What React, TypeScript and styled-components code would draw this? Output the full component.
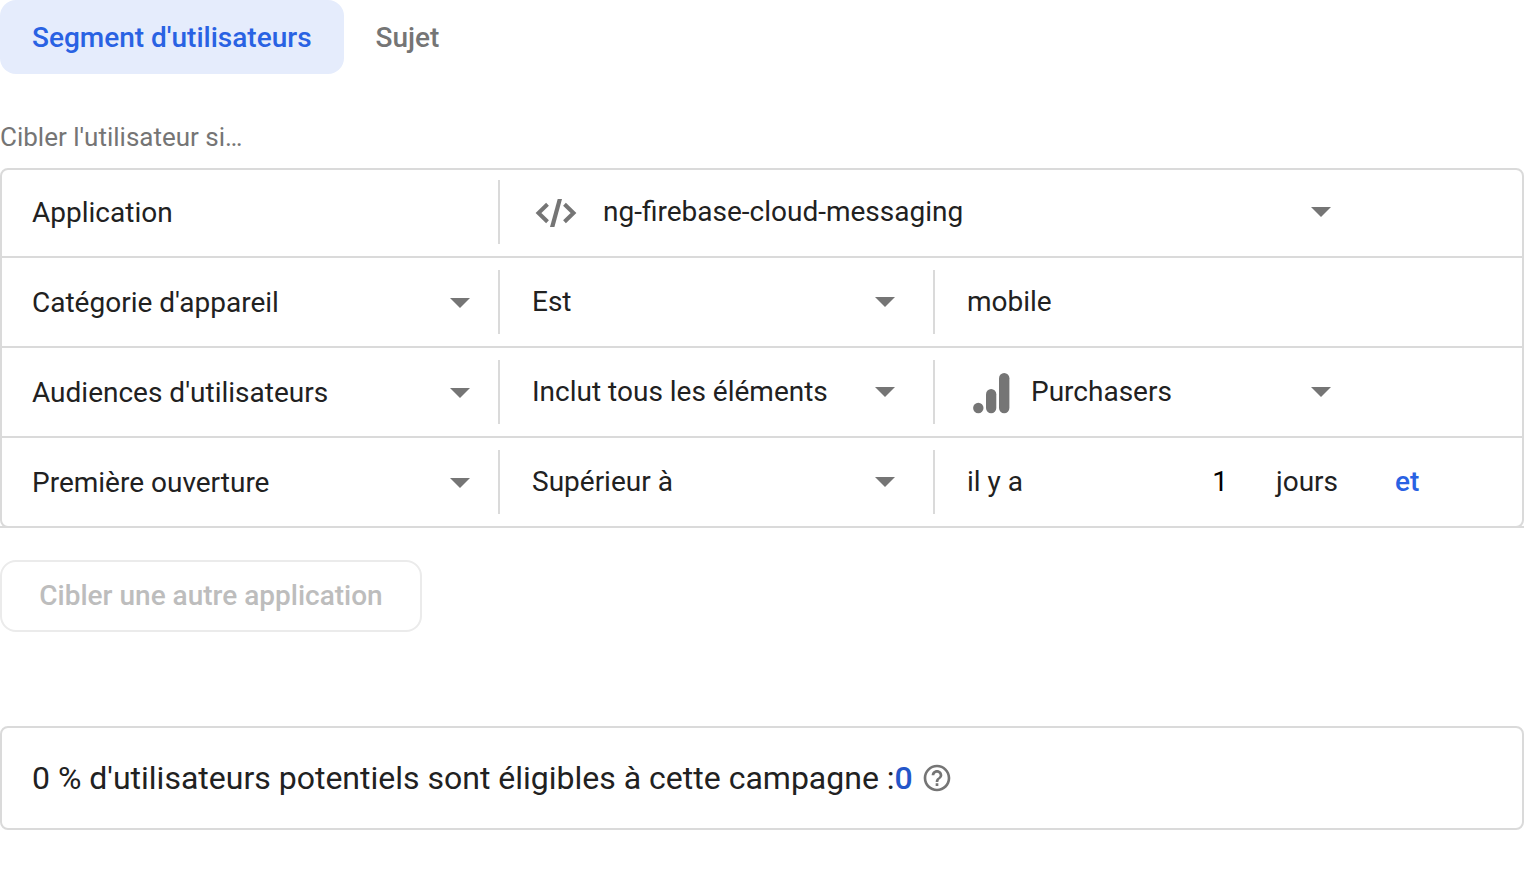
import React from "react";
import styled, { createGlobalStyle } from "styled-components";

const GlobalStyle = createGlobalStyle`
  *, *::before, *::after { box-sizing: border-box; }
  body { margin: 0; background: #fff; }
  body, button, input, select {
    font-family: Roboto, "Liberation Sans", sans-serif;
    font-size: 28px;
    line-height: 40px;
    color: #212121;
  }
`;

const Page = styled.main`
  display: flex;
  flex-direction: column;
  align-items: stretch;
`;

const Tabs = styled.div`
  display: flex;
`;

const Tab = styled.button<{ $active?: boolean }>`
  height: 74px;
  padding: 2px 32px 0;
  border: 0;
  border-radius: 16px;
  background: ${(p) => (p.$active ? "#e5ecfc" : "transparent")};
  color: ${(p) => (p.$active ? "#2962e3" : "#757575")};
  font-weight: 500;
  cursor: pointer;
`;

const Hint = styled.p`
  margin: 43px 0 11px;
  font-size: 26px;
  color: #757575;
`;

const Panel = styled.section`
  position: relative;
  border: 2px solid #dadada;
  border-radius: 8px;

  &::after {
    content: "";
    position: absolute;
    left: -2px;
    right: -2px;
    bottom: -2px;
    height: 2px;
    background: #dadada;
  }
`;

const Row = styled.div`
  display: grid;
  grid-template-columns: minmax(0, 498fr) minmax(0, 435fr) minmax(0, 587fr);
  padding: 12px 0;
  border-bottom: 2px solid #dadada;

  &:first-child { padding-top: 10px; }
  &:last-child { border-bottom: 0; }
`;

const Cell = styled.div<{ $kind: "subject" | "operator" | "value"; $wide?: boolean }>`
  display: flex;
  align-items: center;
  height: 64px;
  grid-column: ${(p) => (p.$wide ? "span 2" : "auto")};
  padding-top: ${(p) => (p.$kind === "subject" ? 2 : 0)}px;
  padding-left: ${(p) => (p.$kind === "subject" ? 30 : 32)}px;
  padding-right: ${(p) => ({ subject: 28, operator: 38, value: 191 })[p.$kind]}px;
  border-right: ${(p) => (p.$kind === "value" ? "0" : "2px solid #dadada")};
`;

const Picker = styled.div`
  display: grid;
  flex: 1;
  align-items: center;
  min-width: 0;

  > * { grid-area: 1 / 1; }
  > svg { justify-self: end; pointer-events: none; }
`;

const Select = styled.select`
  width: 100%;
  height: 60px;
  padding: 0 28px 0 0;
  border: 0;
  appearance: none;
  background: transparent;
  cursor: pointer;
`;

const IconSlot = styled.span<{ $gap: number }>`
  display: flex;
  flex: none;
  margin-right: ${(p) => p.$gap}px;
`;

const ValueInput = styled.input`
  width: 100%;
  padding: 0;
  border: 0;
  background: transparent;
`;

const AgeCell = styled.div`
  display: grid;
  grid-template-columns: 261fr 167fr 127fr;
  align-items: center;
  padding-left: 32px;
  height: 64px;
`;

const AgeField = styled.label`
  display: flex;
  align-items: center;
  justify-content: space-between;
`;

const AgeInput = styled.input`
  width: 96px;
  padding: 0;
  border: 0;
  background: transparent;
  color: #000;
  text-align: right;
  appearance: textfield;

  &::-webkit-inner-spin-button { appearance: none; margin: 0; }
`;

const Unit = styled.span`
  padding-left: 48px;
`;

const AndButton = styled.button`
  justify-self: start;
  padding: 0;
  border: 0;
  background: transparent;
  color: #2962e3;
  font-weight: 500;
  cursor: pointer;
`;

const AddButton = styled.button`
  align-self: flex-start;
  min-width: 422px;
  height: 72px;
  margin-top: 32px;
  padding: 0 30px;
  border: 2px solid #ebebeb;
  border-radius: 16px;
  background: #fff;
  color: #bdbdbd;
  font-weight: 500;
`;

const Summary = styled.section`
  display: flex;
  align-items: center;
  height: 104px;
  margin-top: 94px;
  padding: 0 30px;
  border: 2px solid #dadada;
  border-radius: 8px;
  font-size: 32px;
`;

const Count = styled.strong`
  margin-right: 8px;
  color: #2456c9;
  font-weight: 500;
`;

const HelpButton = styled.button`
  display: flex;
  padding: 0;
  border: 0;
  background: transparent;
  cursor: pointer;
`;

const Arrow = () => (
  <svg width="20" height="10" viewBox="0 0 20 10" aria-hidden="true">
    <path d="M0 0h20L10 10z" fill="#757575" />
  </svg>
);

const CodeIcon = () => (
  <svg width="48" height="32" viewBox="0 0 48 32" fill="none" stroke="#757575" aria-hidden="true">
    <path d="M15.500 8.300 6.500 17l9 8.700M32.500 8.300 41.500 17l-9 8.700" strokeWidth="4" />
    <path d="M25.700 3H30l-7.600 28H18z" fill="#757575" stroke="none" />
  </svg>
);

const AnalyticsIcon = () => (
  <svg width="48" height="48" viewBox="0 0 48 48" fill="#757575" aria-hidden="true">
    <circle cx="11.300" cy="40" r="5.200" />
    <rect x="19" y="21" width="10.300" height="24.200" rx="5.150" />
    <rect x="32" y="5" width="10.400" height="40.200" rx="5.200" />
  </svg>
);

const HelpIcon = () => (
  <svg width="32" height="32" viewBox="0 0 24 24" fill="#757575" aria-hidden="true">
    <path d="M11 18h2v-2h-2v2zm1-16C6.480 2 2 6.480 2 12s4.480 10 10 10 10-4.480 10-10S17.520 2 12 2zm0 18c-4.410 0-8-3.590-8-8s3.590-8 8-8 8 3.590 8 8-3.590 8-8 8zm0-14c-2.210 0-4 1.790-4 4h2c0-1.100.9-2 2-2s2 .9 2 2c0 2-3 1.750-3 5h2c0-2.250 3-2.500 3-5 0-2.210-1.790-4-4-4z" />
  </svg>
);

const Dropdown = ({ label, value }: { label: string; value: string }) => (
  <Picker>
    <Select aria-label={label} defaultValue={value}>
      <option>{value}</option>
    </Select>
    <Arrow />
  </Picker>
);

export default function App() {
  return (
    <>
      <GlobalStyle />
      <Page>
        <Tabs role="tablist">
          <Tab role="tab" aria-selected $active>Segment d'utilisateurs</Tab>
          <Tab role="tab" aria-selected={false}>Sujet</Tab>
        </Tabs>

        <Hint>Cibler l'utilisateur si…</Hint>

        <Panel>
          <Row>
            <Cell $kind="subject">Application</Cell>
            <Cell $kind="value" $wide>
              <IconSlot $gap={23}><CodeIcon /></IconSlot>
              <Dropdown label="Application" value="ng-firebase-cloud-messaging" />
            </Cell>
          </Row>
          <Row>
            <Cell $kind="subject"><Dropdown label="Critère" value="Catégorie d'appareil" /></Cell>
            <Cell $kind="operator"><Dropdown label="Opérateur" value="Est" /></Cell>
            <Cell $kind="value"><ValueInput aria-label="Valeur" defaultValue="mobile" /></Cell>
          </Row>
          <Row>
            <Cell $kind="subject"><Dropdown label="Critère" value="Audiences d'utilisateurs" /></Cell>
            <Cell $kind="operator"><Dropdown label="Opérateur" value="Inclut tous les éléments" /></Cell>
            <Cell $kind="value">
              <IconSlot $gap={16}><AnalyticsIcon /></IconSlot>
              <Dropdown label="Audience" value="Purchasers" />
            </Cell>
          </Row>
          <Row>
            <Cell $kind="subject"><Dropdown label="Critère" value="Première ouverture" /></Cell>
            <Cell $kind="operator"><Dropdown label="Opérateur" value="Supérieur à" /></Cell>
            <AgeCell>
              <AgeField>
                il y a
                <AgeInput type="number" defaultValue={1} />
              </AgeField>
              <Unit>jours</Unit>
              <AndButton>et</AndButton>
            </AgeCell>
          </Row>
        </Panel>

        <AddButton disabled>Cibler une autre application</AddButton>

        <Summary>
          <span>0 % d'utilisateurs potentiels sont éligibles à cette campagne :</span>
          <Count>0</Count>
          <HelpButton aria-label="Aide"><HelpIcon /></HelpButton>
        </Summary>
      </Page>
    </>
  );
}
